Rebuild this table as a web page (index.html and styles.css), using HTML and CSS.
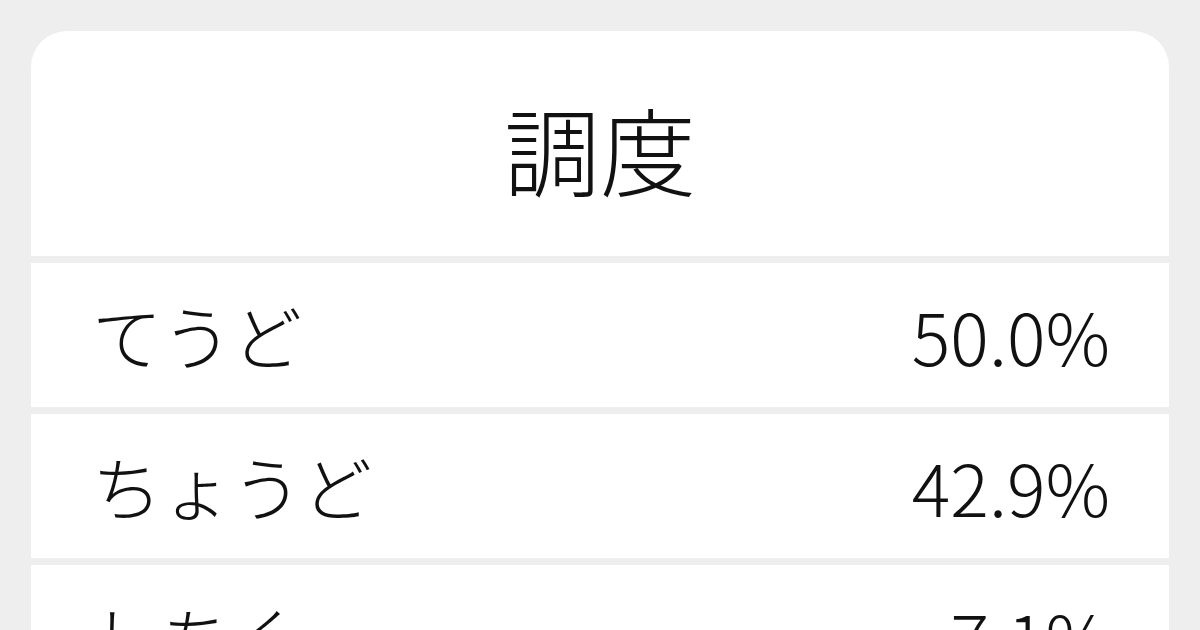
FILE: index.html
```html
<!DOCTYPE html>
<html lang="ja">
<head>
<meta charset="utf-8">
<link rel="stylesheet" href="styles.css">
</head>
<body>
<div class="card">
  <div class="title">調度</div>
  <div class="row"><span class="reading">てうど</span><span class="pct">50.0%</span></div>
  <div class="row"><span class="reading">ちょうど</span><span class="pct">42.9%</span></div>
  <div class="row"><span class="reading">しちく</span><span class="pct">7.1%</span></div>
</div>
</body>
</html>
```
FILE: styles.css
```css
html, body {
  margin: 0;
  padding: 0;
  background: #eeeeee;
  width: 1200px;
  height: 630px;
  overflow: hidden;
}
body {
  padding: 31px 31px 0 31px;
  box-sizing: border-box;
  font-family: "Noto Sans CJK JP", "Noto Sans", sans-serif;
  font-weight: 300;
  color: #111111;
}
.card {
  width: 1138px;
  background: #eeeeee;
  border-radius: 36px 36px 0 0;
  overflow: hidden;
  display: flex;
  flex-direction: column;
  gap: 7px;
}
.title {
  background: #ffffff;
  height: 225px;
  display: flex;
  align-items: center;
  justify-content: center;
  font-size: 96px;
  line-height: 1;
  padding-top: 8px;
  box-sizing: border-box;
}
.row {
  background: #ffffff;
  height: 144px;
  display: flex;
  align-items: center;
  justify-content: space-between;
  padding: 0 59px 0 61px;
  line-height: 1;
  flex-shrink: 0;
}
.reading {
  font-size: 70px;
}
.pct {
  font-size: 72px;
}
```
